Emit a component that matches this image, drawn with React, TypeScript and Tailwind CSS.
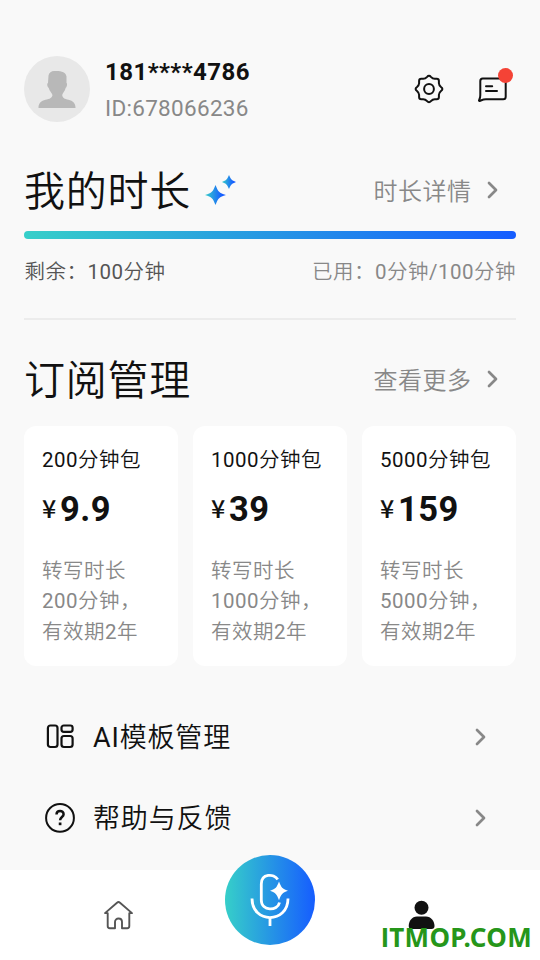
import type { ReactNode } from 'react';

interface Plan {
  minutes: number;
  price: string;
}

const plans: Plan[] = [
  { minutes: 200, price: '9.9' },
  { minutes: 1000, price: '39' },
  { minutes: 5000, price: '159' },
];

const AvatarIcon = () => (
  <svg width="66" height="66" viewBox="0 0 66 66" fill="none">
    <circle cx="33" cy="33" r="33" fill="#e8e8e8" />
    <path
      d="M24.500 19.500C25 16.500 27.500 15 30 15C37 14.600 42 16 42.500 20.500V27C43.600 27.500 43 31 41.700 31.800C41.200 35 38.600 37 38.200 39C38.500 43 42 43 46 44.200C50 45.500 51.500 48 51.500 52H14.500C14.500 48 16 45.500 20 44.200C24 43 28 43 28.500 39C28 37 25.200 35 24.700 31.800C23.200 31 22.700 27.500 24 27Z"
      fill="#b8b8b8"
    />
  </svg>
);

const GearIcon = () => (
  <svg width="30" height="30" viewBox="0 0 30 30" fill="none" stroke="#111" strokeWidth="2" strokeLinejoin="round">
    <path d="M15 1.700Q16 1.700 16.900 2.800Q18.600 4.700 20.800 4.700H22.700Q24.900 4.700 24.900 6.900V9.200Q25 11.300 27 13Q28.400 14 28.400 15Q28.400 16 27 17Q25 18.700 24.900 20.800V23.100Q24.900 25.300 22.700 25.300H20.800Q18.600 25.300 16.900 27.200Q16 28.300 15 28.300Q14 28.300 13.100 27.200Q11.400 25.300 9.200 25.300H7.300Q5.100 25.300 5.100 23.100V20.800Q5 18.700 3 17Q1.600 16 1.600 15Q1.600 14 3 13Q5 11.300 5.100 9.200V6.900Q5.100 4.700 7.300 4.700H9.200Q11.400 4.700 13.100 2.800Q14 1.700 15 1.700Z" />
    <circle cx="15" cy="15" r="4.900" />
  </svg>
);

const MessageIcon = () => (
  <svg width="30" height="26" viewBox="0 0 30 26" fill="none" stroke="#111" strokeWidth="2" strokeLinecap="round" strokeLinejoin="round">
    <path d="M4.700 1.500H25.200Q27.700 1.500 27.700 4V19.800Q27.700 22.300 25.200 22.300H8C5 22.300 3.500 23.300 1.700 24C.8 24.200 .8 23.300 1.300 22.600C2 21.500 2.300 20 2.300 18V4Q2.300 1.500 4.700 1.500Z" />
    <path d="M8 9.300H14.200M8 14.100H19" />
  </svg>
);

const SparkleIcon = () => (
  <svg width="32" height="31" viewBox="0 0 32 31">
    <defs>
      <linearGradient id="sparkle" x1="0" y1="0" x2="1" y2="0">
        <stop offset="0" stopColor="#36cfc9" />
        <stop offset="0.800" stopColor="#165dff" />
      </linearGradient>
    </defs>
    <path d="M10.500 10C13.300 17 14 17.700 21 20C14 22.300 13.300 23 10.500 30C7.700 23 7 22.300 0 20C7 17.700 7.700 17 10.500 10Z" fill="url(#sparkle)" />
    <path d="M24 0C26 4.600 26.500 5.200 31 7C26.500 8.800 26 9.400 24 14C22 9.400 21.500 8.800 17 7C21.500 5.200 22 4.600 24 0Z" fill="url(#sparkle)" />
  </svg>
);

const ChevronIcon = () => (
  <svg width="12" height="18" viewBox="0 0 12 18" fill="none" stroke="#888" strokeWidth="2.700" strokeLinecap="round" strokeLinejoin="round">
    <path d="M2 2L9 9L2 16" />
  </svg>
);

const TemplateIcon = () => (
  <svg width="30" height="30" viewBox="0 0 30 30" fill="none" stroke="#111" strokeWidth="2.200">
    <rect x="2.900" y="3.500" width="9.600" height="21.500" rx="2.500" />
    <rect x="16.500" y="3.500" width="11.100" height="6.300" rx="2.300" />
    <rect x="16.500" y="14" width="11.100" height="11" rx="2.500" />
  </svg>
);

const HelpIcon = () => (
  <svg width="30" height="30" viewBox="0 0 30 30" fill="none" stroke="#111" strokeWidth="2">
    <circle cx="15" cy="14.900" r="13.900" />
    <path d="M11.500 11.500C11.500 6.800 18.600 6.900 18.600 11.200C18.600 14 15.100 14 15.100 17.300" strokeWidth="2.500" />
    <path d="M15.100 19.500V22.200" strokeWidth="2.700" />
  </svg>
);

const HomeIcon = () => (
  <svg width="30" height="30" viewBox="0 0 30 30" fill="none" stroke="#555" strokeWidth="1.900" strokeLinecap="round" strokeLinejoin="round">
    <path d="M3.700 13.100H1L13 2.700Q14.500 1.500 16 2.700L28 13.100H25.300V26Q25.300 28.200 23.200 28.200H18V22C18 17.400 11 17.400 11 22V28.200H5.800Q3.700 28.200 3.700 26Z" />
  </svg>
);

const UserIcon = () => (
  <svg width="28" height="30" viewBox="0 0 28 30" fill="#111">
    <circle cx="13.500" cy="7.800" r="7" />
    <path d="M9 16.500H18C23 16.500 26.500 21 26.500 26Q26.500 29 23.500 29H3.700Q.7 29 .7 26C.7 21 4 16.500 9 16.500Z" />
  </svg>
);

const MicIcon = () => (
  <svg width="40" height="54" viewBox="0 0 40 54" fill="none" stroke="#fff" strokeWidth="2.800">
    <path d="M27.700 6.500C24 .2 11.300 .5 11.300 11V27C11.300 38.500 27.700 38.500 29.500 29.500" />
    <path d="M2 25.500C2 51 38 51 38 25.500" />
    <path d="M20 44.500V53" />
    <path d="M29 8.500C31.600 15 32 15.400 38 17.800C32 20.200 31.600 20.700 29 27.200C26.400 20.700 26 20.200 20 17.800C26 15.400 26.400 15 29 8.500Z" fill="#fff" stroke="none" />
  </svg>
);

const SectionHeader = ({ title, link, icon }: { title: string; link: string; icon?: ReactNode }) => (
  <div className="flex h-15 items-center justify-between pr-[17.5px]">
    <div className="flex items-center gap-[14px]">
      <h2 className="pt-1 text-[41px] leading-[60px] tracking-[0.75px]">{title}</h2>
      {icon}
    </div>
    <button type="button" className="flex items-center gap-[15px] text-2xl tracking-[0.5px] text-[#888]">
      <span className="pt-1">{link}</span>
      <ChevronIcon />
    </button>
  </div>
);

const PlanCard = ({ plan }: { plan: Plan }) => (
  <div className="h-60 rounded-xl bg-white pt-[19px] pl-[18px] whitespace-nowrap">
    <div className="text-[20.5px] leading-[30px] tracking-[0.5px]">{plan.minutes}分钟包</div>
    <div className="mt-[13px] flex h-[42px] leading-[42px]">
      <span className="-mt-[2px] w-[18px] font-['Noto_Sans_CJK_SC',sans-serif] text-[25px] font-medium">¥</span>
      <span className="text-[34.5px] font-bold tracking-[0.5px]">{plan.price}</span>
    </div>
    <p className="mt-[26px] text-[20.5px] leading-[30.5px] tracking-[0.5px] text-[#888]">
      转写时长
      <br />
      {plan.minutes}分钟，
      <br />
      有效期2年
    </p>
  </div>
);

const MenuRow = ({ icon, label }: { icon: ReactNode; label: string }) => (
  <div className="flex h-[81px] items-center px-[20.5px]">
    {icon}
    <span className="ml-[18.5px] flex-1 pt-[3px] text-[27px] tracking-[0.85px]">{label}</span>
    <span className="mr-[9px]">
      <ChevronIcon />
    </span>
  </div>
);

export default function App() {
  return (
    <div className="flex h-[960px] w-[540px] flex-col overflow-hidden bg-[#f9f9f9] font-['Roboto','Noto_Sans_CJK_SC_DemiLight','Noto_Sans_CJK_SC',sans-serif] text-[#111]">
      <main className="flex-1 px-6 pt-14">
        <header className="flex h-[66px] items-center">
          <AvatarIcon />
          <div className="ml-[15px] flex-1 pt-[2px]">
            <div className="text-2xl leading-9 font-bold tracking-[0.45px]">181****4786</div>
            <div className="text-[22.5px] leading-9 tracking-[0.3px] text-[#888]">ID:678066236</div>
          </div>
          <GearIcon />
          <div className="relative mt-px mr-2 ml-[34px]">
            <MessageIcon />
            <span className="absolute -top-[9px] right-[-5px] size-[15px] rounded-full bg-[#f44336]" />
          </div>
        </header>

        <section className="mt-[38px]">
          <SectionHeader title="我的时长" link="时长详情" icon={<SparkleIcon />} />
          <div className="mt-[11px] h-[7.5px] rounded-full bg-linear-to-r/srgb from-[#36cfc9] to-[#165dff]" />
          <div className="mt-[18.5px] flex justify-between pl-[0.5px] text-[20.5px] leading-[30px] tracking-[0.5px]">
            <span className="text-[#555]">剩余：100分钟</span>
            <span className="text-[#888]">已用：0分钟/100分钟</span>
          </div>
          <div className="mt-[31px] h-[1.5px] bg-[#ececec]" />
        </section>

        <section className="mt-[29.5px]">
          <SectionHeader title="订阅管理" link="查看更多" />
          <div className="mt-[16.5px] grid grid-cols-3 gap-[15px]">
            {plans.map((plan) => (
              <PlanCard key={plan.minutes} plan={plan} />
            ))}
          </div>
        </section>

        <nav className="mt-[30.5px]">
          <MenuRow icon={<TemplateIcon />} label="AI模板管理" />
          <MenuRow icon={<HelpIcon />} label="帮助与反馈" />
        </nav>
      </main>

      {/* Bottom tab bar, the mic button sticks out above it */}
      <footer className="relative grid h-[90px] grid-cols-[237px_1fr_237px] bg-white">
        <button type="button" className="flex items-center justify-center">
          <HomeIcon />
        </button>
        <button
          type="button"
          className="absolute -top-[15px] left-[225px] flex size-[90px] items-center justify-center rounded-full bg-linear-to-r/srgb from-[#36cfc9] to-[#165dff]"
        >
          <MicIcon />
        </button>
        <button type="button" className="col-start-3 flex items-center justify-center">
          <UserIcon />
        </button>
        <span className="absolute top-[49px] left-[381px] font-['Noto_Sans',sans-serif] text-[26px] leading-9 font-bold tracking-[0.35px] text-[#26961a]">
          <span className="font-['Lato',sans-serif] font-black">I</span>TMOP.COM
        </span>
      </footer>
    </div>
  );
}
